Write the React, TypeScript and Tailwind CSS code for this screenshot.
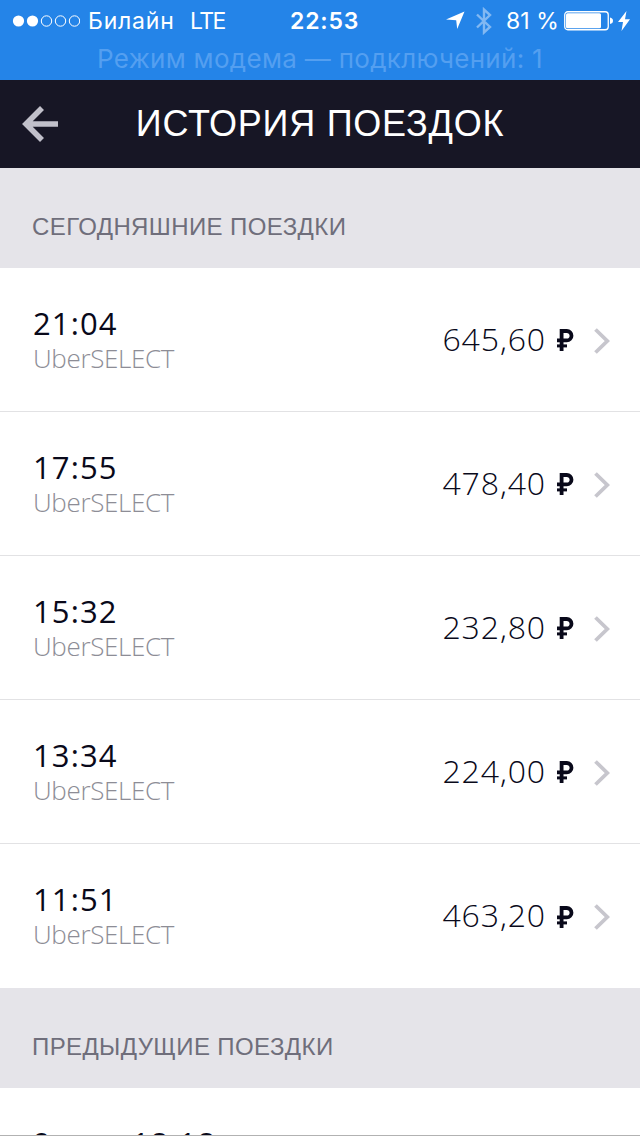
type Trip = {
    time : string
    car : string
    price : string
}

const todayTrips : Trip[] = [
    { time: "21:04", car: "UberSELECT", price: "645,60" },
    { time: "17:55", car: "UberSELECT", price: "478,40" },
    { time: "15:32", car: "UberSELECT", price: "232,80" },
    { time: "13:34", car: "UberSELECT", price: "224,00" },
    { time: "11:51", car: "UberSELECT", price: "463,20" },
]

const SignalDots = ()=>{
    return(
        <svg className="shrink-0" width="68" height="12" viewBox="0 0 68 12" fill="none" stroke="#fff">
            <circle cx="6.5" cy="6" r="5.6" fill="#fff" stroke="none"/>
            <circle cx="20.5" cy="6" r="5.6" fill="#fff" stroke="none"/>
            <circle cx="34.5" cy="6" r="5.2"/>
            <circle cx="48.5" cy="6" r="5.2"/>
            <circle cx="62.5" cy="6" r="5.2"/>
        </svg>
    )
}

const StatusBar = ()=>{
    return(
        <div className="h-20 bg-[#2484e8] font-['Inter','Liberation_Sans',sans-serif] text-white">
            <div className="flex h-10 items-center pl-3 pt-px text-[23px] leading-10">
                <div className="flex w-[278px] items-center">
                    <SignalDots/>
                    <span className="ml-2 w-[102px] whitespace-nowrap tracking-[0.8px]">Билайн</span>
                    <span className="tracking-[-1.6px]">LTE</span>
                </div>
                <span className="w-[156px] font-semibold tracking-[0.8px]">22:53</span>
                <svg className="shrink-0" width="19" height="19" viewBox="0 0 19 19" fill="#fff">
                    <path d="M18.5.5 11.2 18 10.2 9.2 0 8.4Z"/>
                </svg>
                <svg className="ml-[11px] shrink-0" width="16" height="28" viewBox="0 0 16 28" fill="none" stroke="#82b8f2" strokeWidth="2.4">
                    <path d="M1 7.5 14 20 8 25.5V2.5L14 8 1 20.5"/>
                </svg>
                <span className="ml-[14px] w-[58px] whitespace-nowrap tracking-[0.1px]">81 %</span>
                <svg className="shrink-0" width="49" height="20" viewBox="0 0 49 20" fill="none">
                    <rect x=".75" y=".75" width="43.5" height="18" rx="3" stroke="#fff" strokeWidth="1.3"/>
                    <rect x="2" y="2.3" width="35" height="15" rx="1.5" fill="#fff"/>
                    <path d="M46 6.5q3 .7 3 3.3t-3 3.3Z" fill="#fff"/>
                </svg>
                <svg className="ml-[5px] shrink-0" width="12" height="20" viewBox="0 0 12 20" fill="#fff">
                    <path d="M8.5 0 0 11h5L3.5 20 12 8.2H7Z"/>
                </svg>
            </div>
            <div className="h-10 whitespace-nowrap text-center text-[26px] leading-[38px] tracking-[0.3px] text-[#549ff0]">Режим модема — подключений: 1</div>
        </div>
    )
}

const Header = ()=>{
    return(
        <header className="flex h-[88px] items-center bg-[#171625] px-[22px] text-white">
            <svg className="shrink-0" width="36" height="36" viewBox="0 0 36 36" fill="none" stroke="#c1c0ca" strokeWidth="5.6">
                <path d="M36 18H4M20 2 4 18 20 34"/>
            </svg>
            <h1 className="flex-1 whitespace-nowrap pr-9 text-center font-['Liberation_Sans',sans-serif] text-[36px] leading-[88px] tracking-[0.75px]">ИСТОРИЯ ПОЕЗДОК</h1>
        </header>
    )
}

const SectionTitle = ({title} : {title : string})=>{
    return(
        <h2 className="h-[100px] whitespace-nowrap bg-[#e5e4e9] pl-8 pt-[43px] font-['Liberation_Sans',sans-serif] text-[24px] leading-8 tracking-[0.4px] text-[#6f6e7b]">{title}</h2>
    )
}

const Ruble = ()=>{
    return(
        <svg className="ml-[11px] mt-px shrink-0" width="17" height="22" viewBox="0 0 17 22" fill="none" stroke="#09091a" strokeWidth="3.8">
            <path d="M4.6 22V2h5.2a4.6 4.6 0 0 1 0 9.4H0"/>
            <path d="M0 16.9H10" strokeWidth="3"/>
        </svg>
    )
}

const TripRow = ({trip} : {trip : Trip})=>{
    return(
        <li className="flex h-36 items-center border-b border-[#e2e2e4] pl-[33px] pr-[30px] font-['Open_Sans','Noto_Sans',sans-serif] last:border-b-0">
            <div className="flex-1">
                <div className="text-[31px] leading-9 tracking-[1.1px] text-[#09091a]">{trip.time}</div>
                <div className="text-[26px] font-light leading-[34px] tracking-[-0.35px] text-[#8d8d96]">{trip.car}</div>
            </div>
            <span className="pb-0.5 text-[32px] font-light leading-10 tracking-[0.9px] text-[#09091a]">{trip.price}</span>
            <Ruble/>
            <svg className="ml-[20px] mt-0.5 shrink-0" width="16" height="26" viewBox="0 0 16 26" fill="none" stroke="#c7c6cd" strokeWidth="3.8">
                <path d="M1.5 1.5 13.3 13 1.5 24.5"/>
            </svg>
        </li>
    )
}

export default function App(){
    return(
        <main className="flex h-[1136px] w-[640px] flex-col overflow-hidden bg-white">
            <StatusBar/>
            <Header/>
            <SectionTitle title="СЕГОДНЯШНИЕ ПОЕЗДКИ"/>
            <ul>
                {todayTrips.map((trip)=> <TripRow key={trip.time} trip={trip}/>)}
            </ul>
            <SectionTitle title="ПРЕДЫДУЩИЕ ПОЕЗДКИ"/>
            <div className="h-12 overflow-hidden border-b border-[#b2b2b2] pl-[33px] pt-[37px] font-['Open_Sans','Noto_Sans',sans-serif] text-[31px] leading-9 tracking-[1.1px] text-[#09091a] [word-spacing:-4px]">9 мая, 18:18</div>
        </main>
    )
}
